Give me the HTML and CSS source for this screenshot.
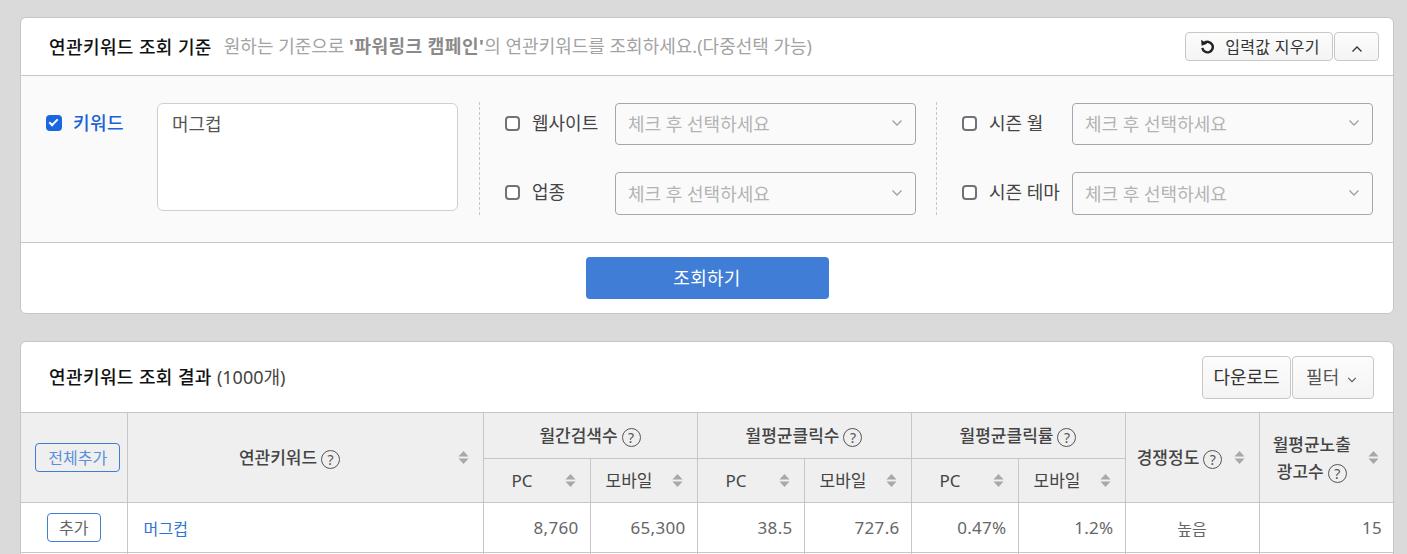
FILE: index.html
```html
<!DOCTYPE html>
<html lang="ko">
<head>
    <meta charset="UTF-8">
    <meta name="viewport" content="width=device-width, initial-scale=1.0">
    <title>연관키워드 조회</title>
    <link rel="stylesheet" href="styles.css">
</head>
<body>
<svg class="icon-defs" aria-hidden="true">
    <symbol id="sort" viewBox="0 0 12 14"><path d="M6 0l5.500 5.800H.5zM6 14L.5 8.200h11z"/></symbol>
    <symbol id="down" viewBox="0 0 12 8"><path d="M1.500 1.500L6 6l4.500-4.500"/></symbol>
</svg>

<section class="card">
    <header class="card-head">
        <h2>연관키워드 조회 기준</h2>
        <p class="hint">원하는 기준으로 <b>'파워링크 캠페인'</b>의 연관키워드를 조회하세요.(다중선택 가능)</p>
        <div class="head-btns">
            <button class="btn btn-clear">
                <svg class="icon-reset" viewBox="0 0 16 16"><path d="M4.600 4.200A5.600 5.600 0 1 1 2.500 9.500"/><path class="fill" d="M1.200 .8l.5 6.500 6-2.300z"/></svg>
                입력값 지우기
            </button>
            <button class="btn btn-fold"><svg class="chev chev-up" viewBox="0 0 12 8"><use href="#down"/></svg></button>
        </div>
    </header>
    <div class="form">
        <div class="form-col form-col-main">
            <label class="check check-on"><input type="checkbox" checked><span>키워드</span></label>
            <textarea class="keywords">머그컵</textarea>
        </div>
        <div class="form-col">
            <div class="form-row">
                <label class="check"><input type="checkbox"><span>웹사이트</span></label>
                <div class="select">체크 후 선택하세요<svg class="chev" viewBox="0 0 12 8"><use href="#down"/></svg></div>
            </div>
            <div class="form-row">
                <label class="check"><input type="checkbox"><span>업종</span></label>
                <div class="select">체크 후 선택하세요<svg class="chev" viewBox="0 0 12 8"><use href="#down"/></svg></div>
            </div>
        </div>
        <div class="form-col form-col-last">
            <div class="form-row">
                <label class="check"><input type="checkbox"><span>시즌 월</span></label>
                <div class="select">체크 후 선택하세요<svg class="chev" viewBox="0 0 12 8"><use href="#down"/></svg></div>
            </div>
            <div class="form-row">
                <label class="check"><input type="checkbox"><span>시즌 테마</span></label>
                <div class="select">체크 후 선택하세요<svg class="chev" viewBox="0 0 12 8"><use href="#down"/></svg></div>
            </div>
        </div>
    </div>
    <div class="form-foot">
        <button class="btn-search">조회하기</button>
    </div>
</section>

<section class="card card-result">
    <header class="card-head card-head-result">
        <h2>연관키워드 조회 결과 <span class="count">(1000개)</span></h2>
        <div class="head-btns">
            <button class="btn btn-big btn-down">다운로드</button>
            <button class="btn btn-big btn-filter">필터 <svg class="chev" viewBox="0 0 12 8"><use href="#down"/></svg></button>
        </div>
    </header>
    <table class="result">
        <colgroup>
            <col class="w-add"><col class="w-key">
            <col class="w-n"><col class="w-n"><col class="w-n"><col class="w-n"><col class="w-n"><col class="w-n">
            <col class="w-end"><col class="w-end">
        </colgroup>
        <thead>
            <tr class="row-top">
                <th rowspan="2"><button class="btn-line btn-all">전체추가</button></th>
                <th rowspan="2"><div class="th-sort th-key"><span class="th-label">연관키워드<i class="help">?</i></span><svg class="sort"><use href="#sort"/></svg></div></th>
                <th colspan="2">월간검색수<i class="help">?</i></th>
                <th colspan="2">월평균클릭수<i class="help">?</i></th>
                <th colspan="2">월평균클릭률<i class="help">?</i></th>
                <th rowspan="2"><div class="th-sort"><span class="th-label">경쟁정도<i class="help">?</i></span><svg class="sort"><use href="#sort"/></svg></div></th>
                <th rowspan="2"><div class="th-sort th-two"><span class="th-label">월평균노출<br>광고수<i class="help">?</i></span><svg class="sort"><use href="#sort"/></svg></div></th>
            </tr>
            <tr class="row-sub">
                <th><div class="th-sort"><span class="th-label">PC</span><svg class="sort"><use href="#sort"/></svg></div></th>
                <th><div class="th-sort"><span class="th-label">모바일</span><svg class="sort"><use href="#sort"/></svg></div></th>
                <th><div class="th-sort"><span class="th-label">PC</span><svg class="sort"><use href="#sort"/></svg></div></th>
                <th><div class="th-sort"><span class="th-label">모바일</span><svg class="sort"><use href="#sort"/></svg></div></th>
                <th><div class="th-sort"><span class="th-label">PC</span><svg class="sort"><use href="#sort"/></svg></div></th>
                <th><div class="th-sort"><span class="th-label">모바일</span><svg class="sort"><use href="#sort"/></svg></div></th>
            </tr>
        </thead>
        <tbody>
            <tr>
                <td class="center"><button class="btn-line btn-add">추가</button></td>
                <td class="key"><a href="#">머그컵</a></td>
                <td class="num">8,760</td>
                <td class="num">65,300</td>
                <td class="num">38.5</td>
                <td class="num">727.6</td>
                <td class="num">0.47%</td>
                <td class="num">1.2%</td>
                <td class="center">높음</td>
                <td class="num">15</td>
            </tr>
            <tr>
                <td></td><td></td><td></td><td></td><td></td><td></td><td></td><td></td><td></td><td></td>
            </tr>
        </tbody>
    </table>
</section>
</body>
</html>
```

FILE: styles.css
```css
/* 공통 */
html, body {
    height: 554px;
    overflow: hidden;
}

body {
    margin: 0;
    padding: 17px 13px 0 20px;
    background-color: #dadada;
    color: #444;
    font-family: "Noto Sans", "Noto Sans CJK KR", sans-serif;
    font-size: 18px;
}

button {
    font-family: inherit;
    cursor: pointer;
}

.icon-defs {
    display: none;
}

.card {
    background: white;
    border: 1px solid #c6c6c6;
    border-radius: 6px;
    overflow: hidden;
}

.card-result {
    margin-top: 27px;
}

/* 카드 헤더 */
.card-head {
    display: flex;
    align-items: center;
    height: 57px;
    padding: 0 14px 0 28px;
    border-bottom: 1px solid #c6c6c6;
}

.card-head h2 {
    margin: 0 0 2px;
    color: #111;
    font-size: 18px;
    font-weight: 500;
    letter-spacing: .4px;
    white-space: nowrap;
}

.hint {
    margin: 0 0 3px 12px;
    color: #a3a3a3;
    font-size: 18px;
    white-space: nowrap;
}

.hint b {
    color: #8a8a8a;
    font-weight: 700;
    letter-spacing: .5px;
}

.head-btns {
    display: flex;
    gap: 1px;
    margin-left: auto;
}

.btn {
    height: 29px;
    padding: 0;
    border: 1px solid #c8c8c8;
    border-radius: 4px;
    background: linear-gradient(#fcfcfc, #f4f4f4);
    color: #333;
    font-size: 16px;
}

.btn-clear {
    display: flex;
    align-items: center;
    justify-content: center;
    gap: 10px;
    width: 148px;
    padding: 0 0 2px 2px;
    letter-spacing: .3px;
}

.btn-fold {
    width: 45px;
}

.icon-reset {
    width: 15px;
    height: 15px;
    margin-top: 2px;
    fill: none;
    stroke: #222;
    stroke-width: 2.6;
}

.icon-reset .fill {
    fill: #222;
    stroke: none;
}

.chev {
    width: 12px;
    height: 8px;
    fill: none;
    stroke: #a0a0a0;
    stroke-width: 1.3;
}

.chev-up {
    transform: rotate(180deg);
    stroke: #333;
}

/* 조회 조건 */
.form {
    display: grid;
    grid-template-columns: 459px 457px 456px;
    padding: 26px 0 27px;
    background-color: #fafafa;
    border-bottom: 1px solid #c6c6c6;
}

.form-col {
    display: flex;
    flex-direction: column;
    gap: 27px;
    padding: 1px 20px 0 25px;
    border-right: 1px dashed #c8c8c8;
}

.form-col-main {
    flex-direction: row;
    gap: 0;
    padding: 1px 21px 0 25px;
}

.form-col-last {
    border-right: none;
}

.form-row {
    display: flex;
}

.check {
    display: flex;
    align-items: center;
    gap: 12px;
    width: 110px;
    height: 40px;
    flex-shrink: 0;
    white-space: nowrap;
}

.check span {
    margin-bottom: 2px;
}

.check input {
    appearance: none;
    position: relative;
    width: 15px;
    height: 15px;
    margin: 0;
    border: 2px solid #6f7378;
    border-radius: 4px;
    background: white;
}

.check input:checked {
    border-color: #1a66e0;
    background: #1a66e0;
}

/* 체크 표시 */
.check input:checked::after {
    content: "";
    position: absolute;
    left: 3px;
    top: 0;
    width: 3px;
    height: 7px;
    border: solid white;
    border-width: 0 2px 2px 0;
    transform: rotate(45deg);
}

.check-on {
    gap: 11px;
    width: 111px;
}

.check-on input {
    width: 16px;
    height: 16px;
}

.check-on span {
    color: #1a62d6;
    font-weight: 500;
    letter-spacing: .5px;
}

.keywords {
    width: 301px;
    height: 108px;
    box-sizing: border-box;
    padding: 6px 14px;
    border: 1px solid #ccd0d6;
    border-radius: 6px;
    color: #555;
    font-family: inherit;
    font-size: 18px;
    resize: none;
}

.select {
    display: flex;
    align-items: center;
    justify-content: space-between;
    box-sizing: border-box;
    width: 301px;
    height: 42px;
    padding: 0 12px 2px;
    border: 1px solid #a3a7ad;
    border-radius: 4px;
    color: #b3b3b3;
    font-size: 18px;
}

.form-row + .form-row .select {
    height: 43px;
}

.form-foot {
    display: flex;
    justify-content: center;
    padding: 14px 0;
}

.btn-search {
    width: 243px;
    height: 42px;
    padding: 0 0 2px;
    border: none;
    border-radius: 4px;
    background-color: #3f7dd6;
    color: white;
    font-size: 18px;
    letter-spacing: .3px;
}

/* 결과 */
.card-head-result {
    height: 70px;
    padding-right: 19px;
    border-bottom: none;
}

.count {
    color: #444;
    font-weight: 400;
    letter-spacing: 0;
}

.btn-big {
    height: 43px;
    padding-bottom: 2px;
    font-size: 18px;
}

.btn-down {
    width: 89px;
}

.btn-filter {
    width: 82px;
    padding-right: 3px;
    color: #555;
}

.btn-filter .chev {
    width: 10px;
    margin-left: 3px;
    stroke: #555;
}

.result {
    width: 1372px;
    table-layout: fixed;
    border-collapse: collapse;
}

.w-add { width: 106px; }
.w-key { width: 356px; }
.w-n { width: 107px; }
.w-end { width: 134px; }

.result th, .result td {
    padding: 0;
    border: 1px solid #c6c6c6;
}

.result tr > :first-child { border-left: none; }
.result tr > :last-child { border-right: none; }

.result th {
    background-color: #efefef;
    color: #444;
    font-size: 17px;
    font-weight: 500;
    line-height: 27px;
}

.row-top th { height: 45px; }
.row-sub th { height: 43px; font-weight: 400; }

.th-sort {
    display: flex;
    align-items: center;
    padding-right: 14px;
}

.th-label {
    flex: 1;
    text-align: center;
}

.th-key .th-label {
    padding-right: 6px;
}

.th-two .th-label,
.row-sub .th-label {
    padding-right: 4px;
}

.sort {
    width: 11px;
    height: 13px;
    flex-shrink: 0;
    fill: #a8a8a8;
}

.help {
    display: inline-block;
    width: 19px;
    height: 19px;
    box-sizing: border-box;
    margin-left: 4px;
    border: 1px solid #555;
    border-radius: 50%;
    color: #555;
    font-size: 14px;
    font-style: normal;
    font-weight: 400;
    line-height: 17px;
    text-align: center;
    vertical-align: -1px;
}

.result td {
    height: 49px;
    color: #666;
    font-size: 16px;
}

.center { text-align: center; }

.result .num {
    padding-right: 11px;
    font-size: 17px;
    letter-spacing: .3px;
    text-align: right;
}

.result .key {
    padding-left: 16px;
    letter-spacing: .2px;
}

.key a {
    color: #2f74d0;
    text-decoration: none;
}

.btn-line {
    height: 29px;
    padding: 0 0 2px;
    border: 1px solid #3f7dd6;
    border-radius: 4px;
    background: white;
    color: #5a8fdc;
    font-size: 16px;
}

.btn-all { width: 85px; margin-left: 8px; background: transparent; }
.btn-add { width: 54px; color: #666; }
```
